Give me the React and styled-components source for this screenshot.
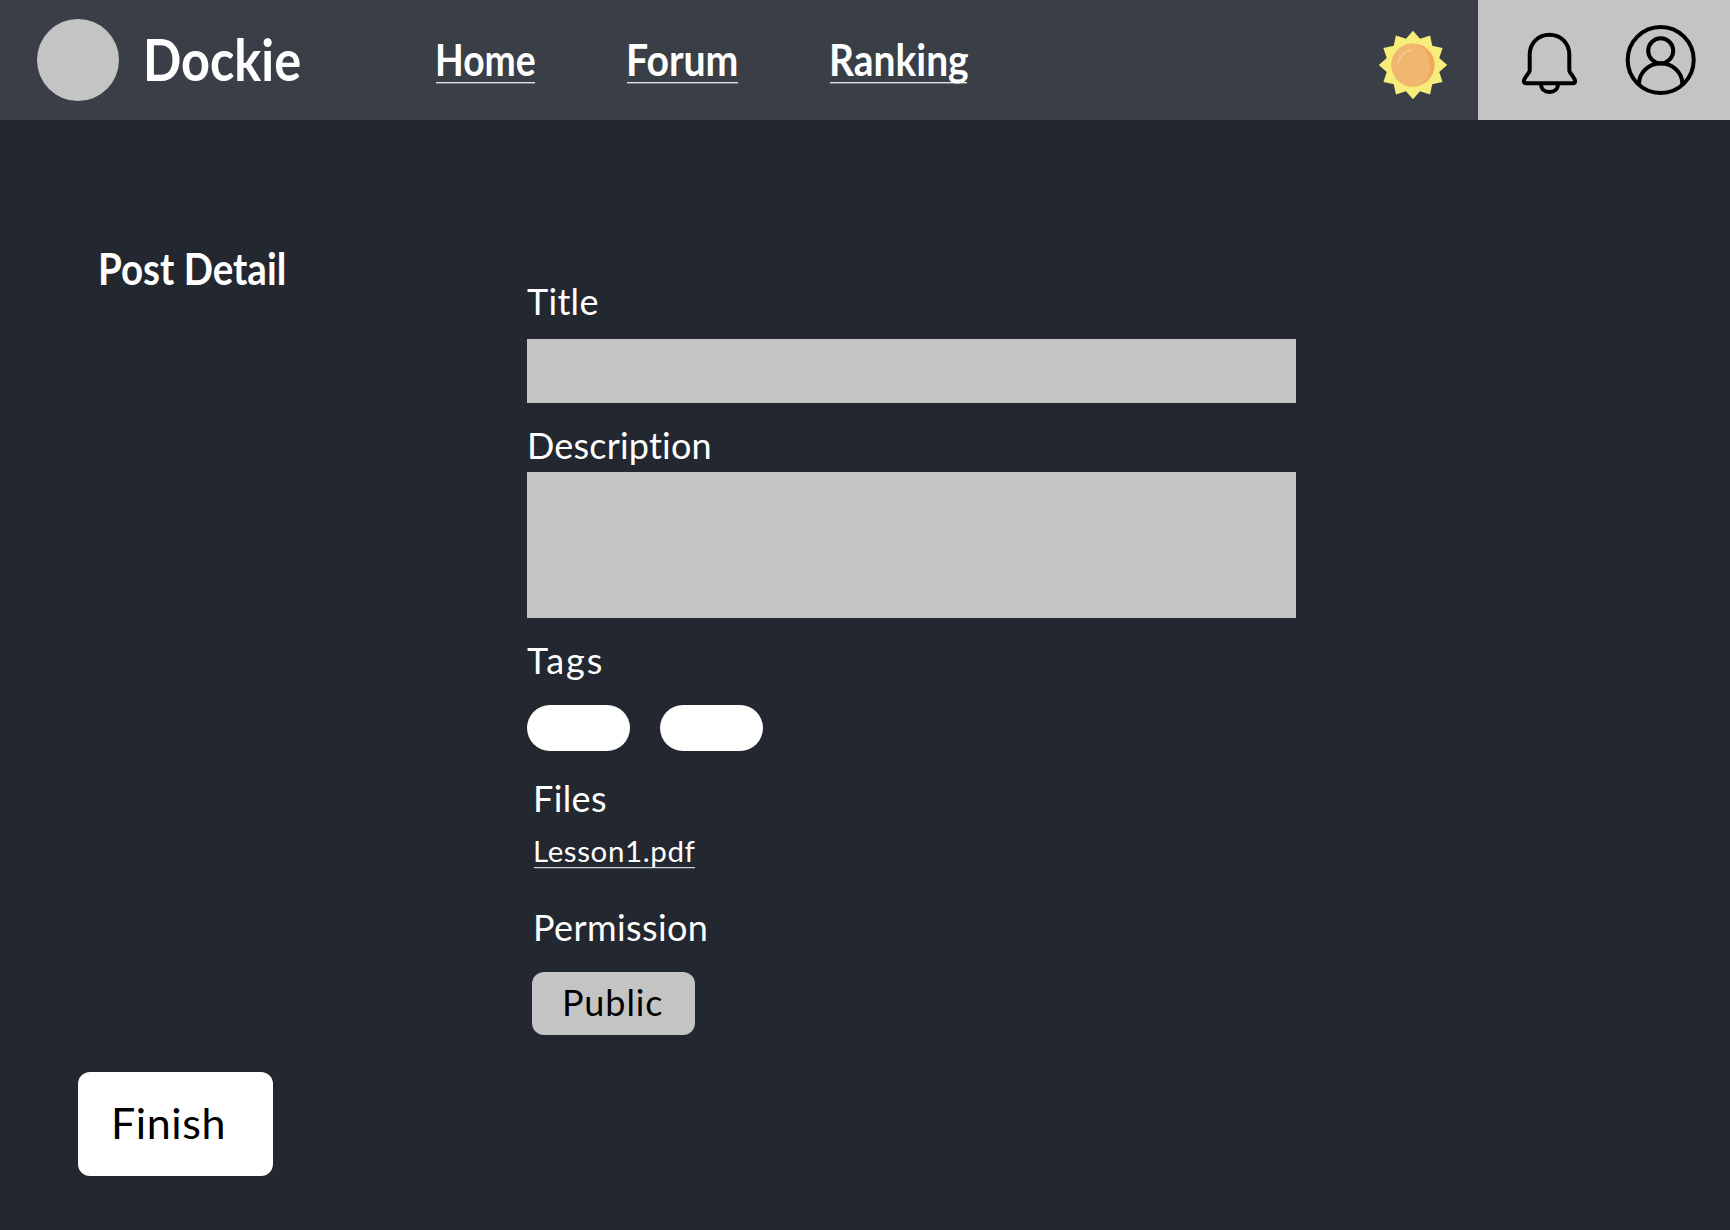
import React from "react";
import styled, { createGlobalStyle } from "styled-components";

const GlobalStyle = createGlobalStyle`
  * { box-sizing: border-box; }
  body {
    margin: 0;
    background: #23272f;
    color: #fff;
    font-family: Lato, "Noto Sans", sans-serif;
    font-variant-ligatures: none;
  }
`;

const Page = styled.div`
  min-height: 1230px;
  display: flex;
  flex-direction: column;
`;

const Header = styled.header`
  display: flex;
  height: 120px;
  background: #3a3e46;
`;

const Avatar = styled.div`
  width: 82px;
  height: 82px;
  margin: 19px 24px 0 37px;
  border-radius: 50%;
  background: #c4c4c4;
`;

/* Bold face drawn narrower than its natural width */
const Condensed = styled.span`
  display: block;
  width: max-content;
  transform: scaleX(${(p) => p.$scale});
  transform-origin: left;
`;

const Brand = styled.div`
  width: 293px;
  padding-top: 24px;
  font-size: 58px;
  font-weight: 700;
  line-height: 70px;
`;

const Nav = styled.nav`
  display: flex;
  align-items: flex-start;
  flex: 1;
  gap: 92px;
`;

const NavLink = styled.a`
  width: ${(p) => p.$width}px;
  height: 83px;
  padding-top: 34px;
  border-bottom: 1px solid #dfe0e1;
  box-shadow: 0 1px 0 #7d8185;
  font-size: 43.5px;
  font-weight: 700;
  line-height: 50px;

  ${Condensed} {
    margin-left: -1px;
  }
`;

const ThemeToggle = styled.div`
  display: flex;
  padding: 30px 30px 0 0;

  svg { display: block; width: 70px; height: 70px; }
`;

const Account = styled.div`
  display: flex;
  width: 252px;
  padding: 18px 26px 0 36px;
  justify-content: space-between;
  background: #c4c4c4;

  svg { display: block; }
`;

const Main = styled.main`
  display: grid;
  grid-template-columns: 449px 769px;
  padding-left: 78px;
`;

const Side = styled.aside`
  display: flex;
  flex-direction: column;
  justify-content: space-between;
  align-items: flex-start;
  height: 1056px;
  padding-top: 123px;
`;

const Heading = styled.h1`
  margin: 0 0 0 20px;
  font-size: 43.5px;
  font-weight: 700;
  line-height: 50px;
`;

const FinishButton = styled.button`
  width: 195px;
  height: 104px;
  padding: 0 0 0 33px;
  border: 0;
  border-radius: 12px;
  background: #fff;
  color: #000;
  font: 400 43px/102px Lato, sans-serif;
  letter-spacing: 0.6px;
  text-align: left;

  span {
    display: block;
    height: 104px;
  }
`;

const Form = styled.form`
  display: flex;
  flex-direction: column;
  align-items: flex-start;
  padding-top: 158px;
`;

const Label = styled.div`
  height: 44px;
  font-size: 36px;
  line-height: 46px;
  letter-spacing: ${(p) => p.$spacing || 0}px;
`;

const Field = styled.div`
  width: 769px;
  height: ${(p) => p.$height}px;
  margin: ${(p) => p.$top}px 0 19px;
  background: #c4c4c4;
`;

const Tags = styled.div`
  display: flex;
  gap: 30px;
  margin: 24px 0;
`;

const Tag = styled.span`
  width: 103px;
  height: 46px;
  border-radius: 23px;
  background: #fff;
`;

const Group = styled.section`
  display: flex;
  flex-direction: column;
  align-items: flex-start;
  padding-left: ${(p) => p.$indent}px;
`;

const FileLink = styled.a`
  width: 161px;
  height: 36px;
  margin: 13px 0 36px 1px;
  border-bottom: 1px solid #d3d4d6;
  box-shadow: 0 1px 0 #4a4f57;
  font-size: 29.5px;
  line-height: 37px;
  letter-spacing: 0.6px;
  white-space: nowrap;
  text-indent: -1px;
`;

const Permission = styled.div`
  width: 163px;
  height: 63px;
  margin: 24px 0 0 -1px;
  padding-left: 30px;
  border-radius: 12px;
  background: #c4c4c4;
  color: #000;
  font-size: 36px;
  line-height: 60px;
  letter-spacing: 0.9px;
`;

const links = [
  { label: "Home", width: 99, scale: 0.857 },
  { label: "Forum", width: 111, scale: 0.9 },
  { label: "Ranking", width: 137, scale: 0.895 },
];

const rays = Array.from({ length: 24 }, (_, i) => {
  const r = i % 2 ? 27.2 : 34.2;
  const a = (i * Math.PI) / 12;
  return `${(35 + r * Math.sin(a)).toFixed(2)},${(35 - r * Math.cos(a)).toFixed(2)}`;
}).join(" ");

const SunIcon = () => (
  <svg viewBox="0 0 70 70">
    <polygon points={rays} fill="#f7ed7b" />
    <circle cx="35" cy="35" r="21.6" fill="#f0a860" />
    <path d="M35 13.4A21.6 21.6 0 1 0 35 56.6A17 21.6 0 0 0 35 13.4Z" fill="#f2b76f" />
    <path d="M20.5 32.5A15 15 0 0 1 32.5 20.5" fill="none" stroke="#f4c78d" strokeWidth="2" strokeLinecap="round" />
  </svg>
);

const BellIcon = () => (
  <svg width="71" height="84" viewBox="0 0 71 84" fill="none" stroke="#000" strokeWidth="4" strokeLinejoin="round">
    <path d="M35.5 16.8C24.3 16.8 15.7 25.3 15.7 36.5V52.5C15.7 54.5 9.9 60.2 9.9 63C9.9 64.4 10.8 65.2 12.2 65.2H58.8C60.2 65.2 61.1 64.4 61.1 63C61.1 60.2 55.3 54.5 55.3 52.5V36.5C55.3 25.3 46.7 16.8 35.5 16.8Z" />
    <path d="M27 66C27 71 30.5 74 35.5 74S44 71 44 66" />
  </svg>
);

const UserIcon = () => (
  <svg width="86" height="84" viewBox="0 0 86 84" fill="none" stroke="#000" strokeWidth="4">
    <circle cx="42.7" cy="42" r="33" />
    <circle cx="42.7" cy="32.8" r="12.5" />
    <path d="M21 66.5V66C21 54.5 30.5 45.6 42.7 45.6S64.4 54.5 64.4 66V66.5" />
  </svg>
);

export default function App() {
  return (
    <Page>
      <GlobalStyle />
      <Header>
        <Avatar />
        <Brand>
          <Condensed $scale={0.87}>Dockie</Condensed>
        </Brand>
        <Nav>
          {links.map((l) => (
            <NavLink key={l.label} $width={l.width}>
              <Condensed $scale={l.scale}>{l.label}</Condensed>
            </NavLink>
          ))}
        </Nav>
        <ThemeToggle>
          <SunIcon />
        </ThemeToggle>
        <Account>
          <BellIcon />
          <UserIcon />
        </Account>
      </Header>
      <Main>
        <Side>
          <Heading>
            <Condensed $scale={0.885}>Post Detail</Condensed>
          </Heading>
          <FinishButton>
            <span>Finish</span>
          </FinishButton>
        </Side>
        <Form>
          <Label $spacing={0.3}>Title</Label>
          <Field $height={64} $top={17} />
          <Label $spacing={0.2}>Description</Label>
          <Field $height={146} $top={6} />
          <Label $spacing={2}>Tags</Label>
          <Tags>
            <Tag />
            <Tag />
          </Tags>
          <Group $indent={6}>
            <Label $spacing={0.4}>Files</Label>
            <FileLink>Lesson1.pdf</FileLink>
            <Label $spacing={0.4}>Permission</Label>
            <Permission>Public</Permission>
          </Group>
        </Form>
      </Main>
    </Page>
  );
}
